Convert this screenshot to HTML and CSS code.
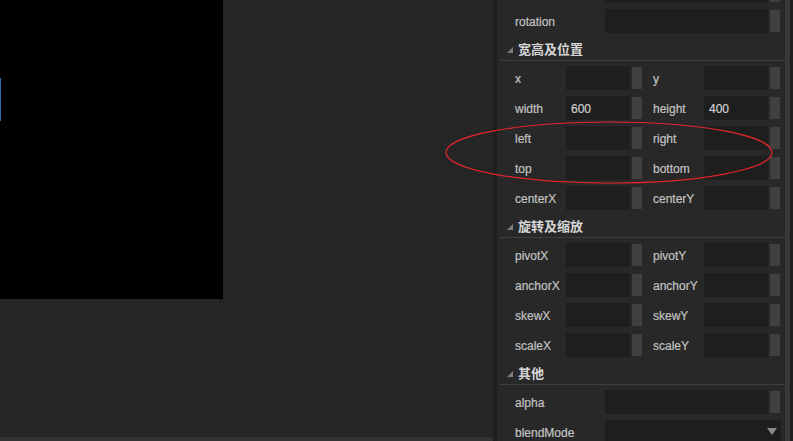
FILE: index.html
```html
<!DOCTYPE html>
<html lang="zh">
<head>
  <meta charset="UTF-8">
  <title>属性面板</title>
  <link rel="stylesheet" href="styles.css">
</head>
<body>

  <div class="editor">
    <div class="scene">
      <div class="stage-area">
        <div class="stage"><span class="stage-mark"></span></div>
      </div>
      <div class="scene-bar"></div>
    </div>

    <div class="splitter"></div>

    <div class="props">
      <div class="props-scroll">
        <div class="row wide">
          <span class="label"></span>
          <div class="field"><div class="box"></div><div class="spin"></div></div>
        </div>
        <div class="row wide">
          <span class="label">rotation</span>
          <div class="field"><div class="box"></div><div class="spin"></div></div>
        </div>

        <div class="group-head"><span class="arrow"></span>宽高及位置</div>
        <div class="row pair">
          <span class="label">x</span>
          <div class="field"><div class="box"></div><div class="spin"></div></div>
          <span class="label">y</span>
          <div class="field"><div class="box"></div><div class="spin"></div></div>
        </div>
        <div class="row pair">
          <span class="label">width</span>
          <div class="field"><div class="box">600</div><div class="spin"></div></div>
          <span class="label">height</span>
          <div class="field"><div class="box">400</div><div class="spin"></div></div>
        </div>
        <div class="row pair">
          <span class="label">left</span>
          <div class="field"><div class="box"></div><div class="spin"></div></div>
          <span class="label">right</span>
          <div class="field"><div class="box"></div><div class="spin"></div></div>
        </div>
        <div class="row pair">
          <span class="label">top</span>
          <div class="field"><div class="box"></div><div class="spin"></div></div>
          <span class="label">bottom</span>
          <div class="field"><div class="box"></div><div class="spin"></div></div>
        </div>
        <div class="row pair">
          <span class="label">centerX</span>
          <div class="field"><div class="box"></div><div class="spin"></div></div>
          <span class="label">centerY</span>
          <div class="field"><div class="box"></div><div class="spin"></div></div>
        </div>

        <div class="group-head"><span class="arrow"></span>旋转及缩放</div>
        <div class="row pair">
          <span class="label">pivotX</span>
          <div class="field"><div class="box"></div><div class="spin"></div></div>
          <span class="label">pivotY</span>
          <div class="field"><div class="box"></div><div class="spin"></div></div>
        </div>
        <div class="row pair">
          <span class="label">anchorX</span>
          <div class="field"><div class="box"></div><div class="spin"></div></div>
          <span class="label">anchorY</span>
          <div class="field"><div class="box"></div><div class="spin"></div></div>
        </div>
        <div class="row pair">
          <span class="label">skewX</span>
          <div class="field"><div class="box"></div><div class="spin"></div></div>
          <span class="label">skewY</span>
          <div class="field"><div class="box"></div><div class="spin"></div></div>
        </div>
        <div class="row pair">
          <span class="label">scaleX</span>
          <div class="field"><div class="box"></div><div class="spin"></div></div>
          <span class="label">scaleY</span>
          <div class="field"><div class="box"></div><div class="spin"></div></div>
        </div>

        <div class="group-head"><span class="arrow"></span>其他</div>
        <div class="row wide">
          <span class="label">alpha</span>
          <div class="field"><div class="box"></div><div class="spin"></div></div>
        </div>
        <div class="row wide">
          <span class="label">blendMode</span>
          <div class="field"><div class="box select"><span class="drop"></span></div></div>
        </div>
      </div>
    </div>

    <div class="scrollbar"><div class="thumb"></div></div>

    <!-- annotation drawn over the screenshot -->
    <svg class="mark" width="793" height="441" viewBox="0 0 793 441">
      <ellipse cx="609" cy="152.5" rx="163" ry="30.5" fill="none" stroke="#e0262b" stroke-width="1.2"/>
    </svg>
  </div>

</body>
</html>
```

FILE: styles.css
```css
* { box-sizing: border-box; }
html, body { margin: 0; height: 100%; overflow: hidden; }
body {
  background: #252525;
  font-family: "Liberation Sans", "Noto Sans CJK SC", sans-serif;
  font-size: 12px;
  color: #c3c3c3;
}

.editor { position: relative; display: flex; width: 793px; height: 441px; }

/* left: scene view */
.scene { width: 493px; display: flex; flex-direction: column; }
.stage-area { flex: 1; background: #252525; }
.stage { position: relative; width: 223px; height: 299px; background: #000; }
.stage-mark { position: absolute; left: 0; top: 78px; width: 1px; height: 43px; background: #2f6ea5; }
.scene-bar { height: 4px; background: #333; }

.splitter { width: 4px; background: #1e1e1e; }

/* right: property panel */
.props { width: 288px; background: #282828; overflow: hidden; }
.props-scroll { margin-top: -24px; }

.row { height: 30px; padding: 3px 5px 3px 18px; display: grid; align-items: center; }
.row.pair { grid-template-columns: 51px 76px 11px 51px 76px; }
.row.pair .label:nth-of-type(2) { grid-column: 4; }
.row.wide { grid-template-columns: 90px 175px; }

.label { white-space: nowrap; padding-top: 2px; -webkit-text-stroke: 0.2px #c3c3c3; }

.field { display: flex; height: 24px; gap: 2px; }
.box {
  flex: 1;
  background: #1e1e1e;
  padding-left: 5px;
  line-height: 27px;
  font-size: 12px;
  color: #d0d0d0;
  -webkit-text-stroke: 0.2px #d0d0d0;
}
.spin { width: 10px; margin: 1px 0; background: #404040; }
.box.select { position: relative; margin-right: -1px; }
.drop {
  position: absolute; right: 4px; top: 8px;
  border-left: 5px solid transparent;
  border-right: 5px solid transparent;
  border-top: 7px solid #8c8c8c;
}

.group-head {
  height: 25px;
  margin: 0 0 2px 3px;
  padding: 1px 0 0 7px;
  border-bottom: 1px solid #3d3d3d;
  display: flex;
  align-items: center;
  font-size: 13px;
  font-weight: bold;
  color: #d6d6d6;
}
.arrow {
  width: 0; height: 0;
  margin-right: 5px;
  border-left: 6px solid transparent;
  border-bottom: 6px solid #7d7d7d;
  margin-top: 2px;
}

.scrollbar { width: 8px; background: #1e1e1e; display: flex; }
.thumb { width: 5px; background: #383838; }

.mark { position: absolute; left: 0; top: 0; pointer-events: none; }
```
